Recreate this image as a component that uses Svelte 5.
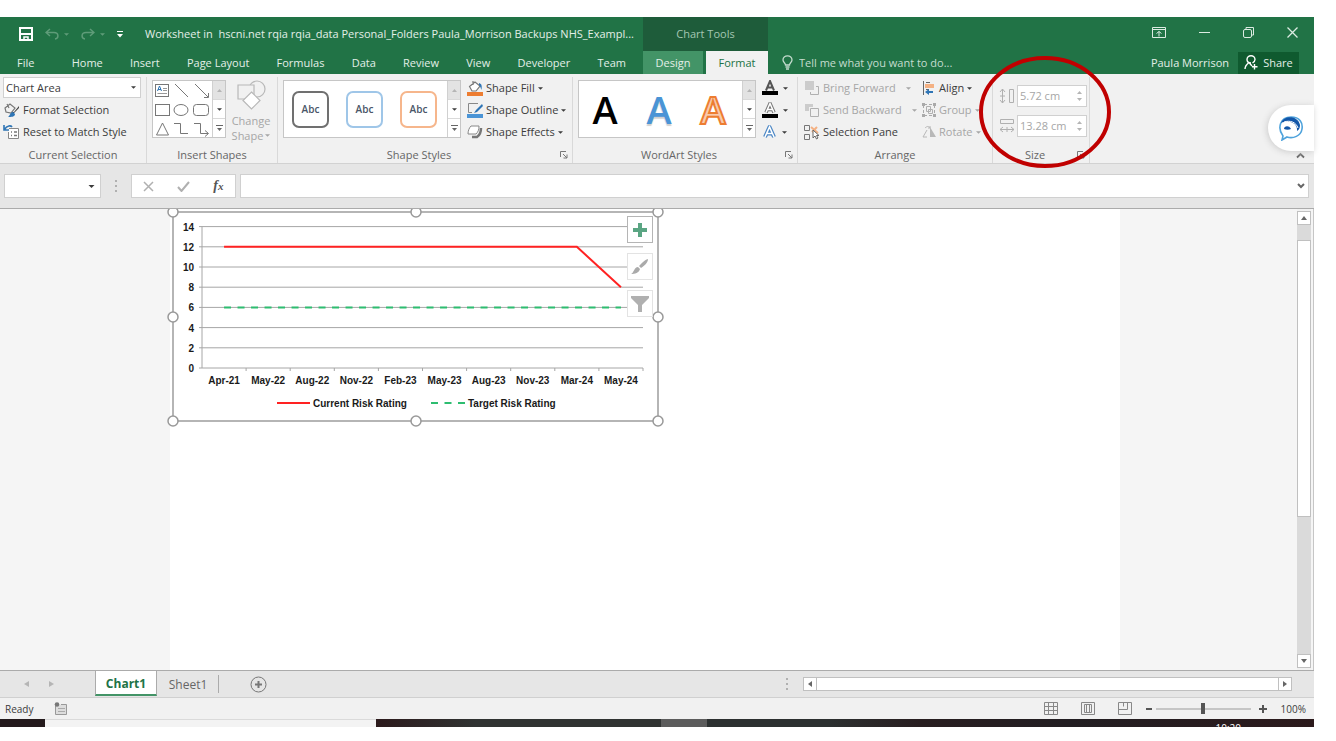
<script>
let area = 'Chart Area'
let nameBox = ''
let formula = ''
let shapeHeight = '5.72 cm'
let shapeWidth = '13.28 cm'
let zoom = 50
let activeTab = 'Format'
let activeSheet = 'Chart1'

const tabs = ['File', 'Home', 'Insert', 'Page Layout', 'Formulas', 'Data', 'Review', 'View', 'Developer', 'Team']
const toolTabs = ['Design', 'Format']
const months = ['Apr-21', 'May-22', 'Aug-22', 'Nov-22', 'Feb-23', 'May-23', 'Aug-23', 'Nov-23', 'Mar-24', 'May-24']
const current = [12, 12, 12, 12, 12, 12, 12, 12, 12, 8]
const target = [6, 6, 6, 6, 6, 6, 6, 6, 6, 6]
const ticks = [0, 2, 4, 6, 8, 10, 12, 14]

const plotLeft = 35
const plotBottom = 163
const step = 44.1

const px = (i) => plotLeft + step * (i + 0.5)
const py = (value) => plotBottom - value * 10.1
const points = (series) => series.map((value, i) => `${px(i)},${py(value)}`).join(' ')

const handles = [[6, 7], [249, 7], [491, 7], [6, 112], [491, 112], [6, 216], [249, 216], [491, 216]]
</script>

<style>
:global(body) {
    margin: 0;
    background: #fff;
}

.page {
    box-sizing: border-box;
    min-height: 100vh;
    padding: 17px 22px 14px 0;
    display: flex;
    flex-direction: column;
    font-family: "Open Sans", "Noto Sans", sans-serif;
    font-size: 11px;
    line-height: 16px;
    color: #3c3c3c;
}

button, input, select {
    font: inherit;
    color: inherit;
    background: none;
    border: none;
    border-radius: 0;
    margin: 0;
    padding: 0;
    box-sizing: border-box;
    min-width: 0;
}

svg {
    display: block;
    flex: none;
    fill: none;
}

/* header */

.header {
    display: flex;
    background: #217346;
    color: #e3efe8;
}

.header-left {
    width: 643px;
}

.title-row {
    height: 34px;
    display: flex;
    align-items: center;
    white-space: pre;
}

.quick {
    width: 145px;
    display: flex;
    align-items: center;
    gap: 12px;
    box-sizing: border-box;
    padding-left: 19px;
}

.quick button {
    display: flex;
    align-items: center;
    gap: 5px;
}

.quick .off {
    color: #5f9c79;
}

.tab-row {
    height: 23px;
    display: flex;
    align-items: center;
}

.tab {
    height: 23px;
    white-space: nowrap;
}

.main-tabs {
    justify-content: space-between;
    padding: 0 17px 0 17px;
}

.main-tabs .tab:first-child {
    padding-right: 10px;
}

.tools {
    width: 125px;
    background: #1e5c3a;
}

.tools p {
    margin: 0;
    height: 34px;
    line-height: 34px;
    text-align: center;
    color: #a5c7b3;
}

.tools .tab-row {
    background: #217346;
    justify-content: space-between;
}

.tools .tab {
    width: 60px;
    background: #439467;
}

.tools .tab.active {
    width: 62px;
    background: #f1f1f1;
    color: #217346;
}

.header-right {
    flex: 1;
}

.window-buttons {
    box-sizing: border-box;
    justify-content: flex-end;
    gap: 33px;
    padding: 0 16px 4px 0;
}

.tell {
    flex: 1;
    display: flex;
    align-items: center;
    gap: 6px;
    padding-left: 14px;
    color: #c5dccf;
}

.tell input {
    width: 240px;
}

.tell input::placeholder {
    color: #c5dccf;
    opacity: 1;
}

.share {
    display: flex;
    align-items: center;
    justify-content: center;
    gap: 5px;
    width: 61px;
    height: 22px;
    margin: 0 15px 0 9px;
    background: #0f5a2f;
}

/* ribbon */

.ribbon {
    position: relative;
    display: flex;
    height: 90px;
    box-sizing: border-box;
    padding-top: 3px;
    background: #f1f1f1;
    border-bottom: 1px solid #d2d2d2;
}

.group {
    box-sizing: border-box;
    height: 86px;
    border-right: 1px solid #d9d9d9;
    display: flex;
    flex-direction: column;
    justify-content: space-between;
}

.group-body {
    display: flex;
    align-items: flex-start;
}

.group-name {
    display: flex;
    align-items: center;
    color: #666;
}

.group-name span {
    flex: 1;
    text-align: center;
}

.group-name button {
    margin-right: 4px;
}

.selection {
    width: 147px;
}

.shapes {
    width: 131px;
}

.styles {
    width: 295px;
}

.wordart {
    width: 225px;
}

.arrange {
    width: 195px;
}

.size {
    width: 97px;
}

.stack {
    display: flex;
    flex-direction: column;
}

.stack button {
    height: 22px;
    display: flex;
    align-items: center;
    gap: 3px;
    white-space: nowrap;
}

.selection .stack {
    padding-left: 3px;
}

.drop {
    position: relative;
    width: 138px;
    height: 21px;
    background: #fff;
    border: 1px solid #d0d0d0;
    box-sizing: border-box;
    display: flex;
    align-items: center;
    margin-bottom: 1px;
}

.drop select {
    appearance: none;
    width: 100%;
    height: 19px;
    padding-left: 2px;
}

.drop svg {
    position: absolute;
    right: 4px;
    pointer-events: none;
}

.off {
    color: #a6a6a6;
}

.gallery {
    display: flex;
    background: #fff;
    border: 1px solid #c6c6c6;
    box-sizing: border-box;
    height: 58px;
    margin-top: 3px;
}

.gallery .items {
    flex: 1;
    display: flex;
    align-items: center;
}

.scroller {
    width: 13px;
    display: flex;
    flex-direction: column;
    border-left: 1px solid #d0d0d0;
    box-sizing: border-box;
}

.scroller button {
    flex: 1;
    display: flex;
    align-items: center;
    justify-content: center;
}

.scroller button + button {
    border-top: 1px solid #d9d9d9;
}

.scroller button:first-child {
    background: #e3e3e3;
    color: #b5b5b5;
}

.shapes .gallery {
    width: 74px;
    margin-left: 5px;
}

.shapes .items {
    display: block;
}

.change {
    display: flex;
    flex-direction: column;
    align-items: center;
    width: 50px;
    padding-top: 3px;
    line-height: 15px;
}

.change svg {
    margin-bottom: 3px;
}

.change span {
    display: flex;
    align-items: center;
    gap: 2px;
}

.change span svg {
    margin: 0;
}

.wide {
    width: 178px;
    margin-left: 5px;
}

.wide .items {
    gap: 17px;
    padding-left: 8px;
}

.preset {
    width: 37px;
    height: 37px;
    border: 2px solid #707070;
    border-radius: 7px;
    font-size: 10px;
    font-weight: 600;
    color: #4a5668;
}

.preset.blue {
    border-color: #9fc6e8;
}

.preset.orange {
    border-color: #f6b68c;
}

.wide .letters {
    gap: 14px;
    padding-left: 6px;
}

.letter {
    width: 40px;
    height: 56px;
    font-size: 38px;
    line-height: 56px;
    font-weight: 600;
    color: #000;
}

.letter.blue {
    color: #4a94d6;
    text-shadow: 0 2px 1px #d0d0d0;
}

.letter.orange {
    color: #f8cbad;
    -webkit-text-stroke: 2px #ed7d31;
}

.styles .stack, .wordart .stack {
    padding-left: 6px;
}

.wordart .stack button {
    gap: 5px;
}

.arrange .stack {
    padding-left: 6px;
    width: 112px;
}

.arrange .stack button svg + svg {
    margin-left: 7px;
}

.arrange .stack + .stack {
    width: 60px;
}

.arrange .stack + .stack button svg + svg {
    margin-left: 0;
}

.size .group-body {
    flex-direction: column;
    gap: 8px;
    padding: 8px 0 0 6px;
}

.spin {
    display: flex;
    align-items: center;
    gap: 2px;
}

.spin-box {
    display: flex;
    width: 70px;
    height: 22px;
    box-sizing: border-box;
    background: #fff;
    border: 1px solid #d0d0d0;
    color: #a6a6a6;
}

.spin-box input {
    flex: 1;
    padding-left: 2px;
}

.spin-box div {
    width: 14px;
    display: flex;
    flex-direction: column;
    align-items: center;
    justify-content: space-evenly;
}

.ring {
    position: absolute;
    left: 978px;
    top: -19px;
    z-index: 2;
    pointer-events: none;
}

.chat {
    position: absolute;
    right: 0;
    top: 31px;
    width: 46px;
    height: 46px;
    padding-left: 10px;
    background: #fff;
    border-radius: 23px 0 0 23px;
    box-shadow: -1px 1px 6px #ccc;
}

.collapse {
    margin: auto 9px 4px auto;
}

/* formula bar */

.formula {
    display: flex;
    align-items: center;
    height: 45px;
    box-sizing: border-box;
    padding: 0 5px 0 4px;
    background: #e6e6e6;
    border-bottom: 1px solid #ababab;
}

.field {
    display: flex;
    align-items: center;
    height: 24px;
    box-sizing: border-box;
    background: #fff;
    border: 1px solid #d0d0d0;
}

.field input {
    flex: 1;
    padding-left: 4px;
}

.name-box {
    width: 97px;
    padding-right: 5px;
}

.formula .dots {
    margin: 0 14px;
}

.checks {
    width: 105px;
    justify-content: space-around;
    color: #b0b0b0;
    margin-right: 4px;
}

.fx {
    font-family: "Liberation Serif", serif;
    font-style: italic;
    font-weight: 700;
    font-size: 14px;
    color: #555;
}

.fx small {
    font-size: 11px;
}

.entry {
    flex: 1;
    padding-right: 3px;
}

/* sheet */

.sheet {
    flex: 1;
    display: flex;
    background: #f5f5f5;
    border-right: 1px solid #c6c6c6;
}

.canvas {
    flex: 1;
    padding: 0 177px 0 170px;
}

.paper {
    position: relative;
    height: 100%;
    min-height: 240px;
    background: #fff;
}

.chart {
    position: absolute;
    left: -3px;
    top: -4px;
    clip-path: inset(4px 0 0 0);
}

.chart text {
    font-family: "Liberation Sans", Arial, sans-serif;
    font-size: 10px;
    font-weight: 700;
    fill: #1a1a1a;
}

.chart-buttons {
    position: absolute;
    left: 457px;
    top: 7px;
    display: flex;
    flex-direction: column;
    gap: 10px;
}

.chart-buttons button {
    width: 26px;
    height: 27px;
    display: flex;
    align-items: center;
    justify-content: center;
    background: #fff;
    border: 1px solid #e3e3e3;
}

.chart-buttons button:first-child {
    border-color: #b5b5b5;
}

.vscroll {
    width: 14px;
    margin-right: 2px;
    padding: 2px 0;
    display: flex;
    flex-direction: column;
    background: #f1f1f1;
}

.vscroll button, .hscroll button {
    width: 14px;
    height: 14px;
    box-sizing: border-box;
    display: flex;
    align-items: center;
    justify-content: center;
    background: #fff;
    border: 1px solid #c0c0c0;
    color: #666;
}

.track {
    flex: 1;
    padding-top: 15px;
    background: #dadada;
}

.thumb {
    height: 67%;
    box-sizing: border-box;
    background: #fff;
    border: 1px solid #c0c0c0;
}

.sheet-bar {
    display: flex;
    align-items: center;
    height: 28px;
    box-sizing: border-box;
    background: #e6e6e6;
    border-top: 1px solid #ababab;
    border-bottom: 1px solid #d0d0d0;
    font-size: 12px;
}

.arrows {
    width: 95px;
    box-sizing: border-box;
    padding-left: 24px;
    display: flex;
    gap: 20px;
    color: #b5b5b5;
}

.sheet-tab {
    height: 25px;
    width: 62px;
    padding-top: 2px;
    align-self: flex-start;
    color: #666;
}

.sheet-tab.active {
    background: #fff;
    color: #217346;
    font-weight: 700;
    border: solid #ababab;
    border-width: 0 1px;
    border-bottom: 2px solid #439467;
}

.divider {
    width: 1px;
    height: 18px;
    background: #ababab;
    margin: 0 31px 0 -1px;
}

.sheet-bar .dots {
    margin-left: auto;
}

.hscroll {
    display: flex;
    width: 489px;
    margin: 0 22px 0 15px;
}

.hscroll div {
    flex: 1;
    background: #fff;
    border: solid #c0c0c0;
    border-width: 1px 0;
}

.status {
    display: flex;
    align-items: center;
    height: 21px;
    box-sizing: border-box;
    padding: 0 8px 0 5px;
    background: #f1f1f1;
    font-size: 10px;
}

.status .record {
    margin-left: 21px;
}

.views {
    display: flex;
    gap: 23px;
    margin: 0 14px 0 auto;
}

.zoom {
    display: flex;
    align-items: center;
    gap: 3px;
}

.zoom input {
    appearance: none;
    width: 95px;
    height: 12px;
    background: linear-gradient(#c6c6c6, #c6c6c6) center / 100% 2px no-repeat;
    margin: 0 5px 0 1px;
}

.zoom input::-webkit-slider-thumb {
    appearance: none;
    width: 4px;
    height: 11px;
    background: #555;
}

.percent {
    margin-left: 14px;
}

/* sliver of the desktop task bar */

.taskbar {
    display: flex;
    height: 8px;
    overflow: hidden;
    background: #241a1c;
    color: #fff;
}

.taskbar .start {
    width: 45px;
}

.taskbar .search {
    width: 331px;
    background: #f3f3f3;
    border-top: 1px solid #dadada;
    box-sizing: border-box;
}

.taskbar .apps {
    width: 285px;
    background: linear-gradient(90deg, #2c1a1c, #303332 35%);
}

.taskbar .open {
    width: 46px;
    background: #5c5c5c;
}

.taskbar .tray {
    flex: 1;
    background: linear-gradient(90deg, #2c3030, #2c3030 20%, #281e20 35%, #221e22 60%, #2c1a1c);
    text-align: right;
    padding-right: 73px;
    font-size: 10px;
    line-height: 14px;
}

.taskbar time {
    display: block;
    padding-top: 2px;
}
</style>

{#snippet caret(w = 5)}
    <svg width={w} height="3" viewBox="0 0 6 3"><path d="M0 0h6L3 3z" fill="currentColor" /></svg>
{/snippet}

{#snippet launcher(name)}
    <button aria-label={name}>
        <svg width="8" height="8" stroke="#777"><path d="M.5 6V.5H6M3 3l4 4M7 3.500V7H3.500" /></svg>
    </button>
{/snippet}

{#snippet scroller(name)}
    <div class="scroller">
        <button aria-label="{name} row up"><svg width="5" height="3"><path d="M0 3h5L2.500 0z" fill="currentColor" /></svg></button>
        <button aria-label="{name} row down">{@render caret()}</button>
        <button aria-label="More {name}"><svg width="7" height="7"><path d="M0 .5h7" stroke="#666" /><path d="M1 3h5L3.500 6z" fill="#666" /></svg></button>
    </div>
{/snippet}

{#snippet dots()}
    <svg class="dots" width="2" height="12"><path d="M0 0h2v2H0zM0 5h2v2H0zM0 10h2v2H0z" fill="#b0b0b0" /></svg>
{/snippet}

{#snippet spinArrows(name)}
    <div>
        <button aria-label="Increase {name}"><svg width="5" height="3"><path d="M0 3h5L2.500 0z" fill="#b5b5b5" /></svg></button>
        <button aria-label="Decrease {name}"><svg width="5" height="3"><path d="M0 0h5L2.500 3z" fill="#b5b5b5" /></svg></button>
    </div>
{/snippet}

<div class="page">
    <header class="header">
        <div class="header-left">
            <div class="title-row">
                <div class="quick">
                    <button aria-label="Save">
                        <svg width="14" height="14" stroke="#fff" stroke-width="2"><path d="M1 1h12v12H1zM1 7h12" /><path d="M5 13v-3h4v3" stroke-width="1.500" /></svg>
                    </button>
                    <button class="off" aria-label="Undo">
                        <svg width="14" height="12" stroke="currentColor" stroke-width="1.500"><path d="M5 1L1 4.500 5 8M1 4.500h8c5 0 5 6 1 6.500" /></svg>
                        {@render caret()}
                    </button>
                    <button class="off" aria-label="Redo">
                        <svg width="14" height="12" stroke="currentColor" stroke-width="1.500"><path d="M9 1l4 3.500L9 8M13 4.500H5C0 4.500 0 10.500 4 11" /></svg>
                        {@render caret()}
                    </button>
                    <button aria-label="Customize Quick Access Toolbar">
                        <svg width="6" height="7"><path d="M0 .5h6" stroke="#fff" /><path d="M0 3h6L3 6.500z" fill="#fff" /></svg>
                    </button>
                </div>
                <span>Worksheet in  hscni.net rqia rqia_data Personal_Folders Paula_Morrison Backups NHS_Exampl...</span>
            </div>
            <nav class="tab-row main-tabs">
                {#each tabs as tab}
                    <button class="tab" on:click={() => activeTab = tab}>{tab}</button>
                {/each}
            </nav>
        </div>
        <div class="tools">
            <p>Chart Tools</p>
            <nav class="tab-row">
                {#each toolTabs as tab}
                    <button class="tab" class:active={activeTab === tab} on:click={() => activeTab = tab}>{tab}</button>
                {/each}
            </nav>
        </div>
        <div class="header-right">
            <div class="title-row window-buttons">
                <button aria-label="Ribbon Display Options">
                    <svg width="14" height="11" stroke="#dcebe2"><path d="M.5 .5h13v10H.5zM.5 2.500h13M7 9.500V4.500M4.500 6.500L7 4.500l2.500 2" /></svg>
                </button>
                <button aria-label="Minimize"><svg width="11" height="11" stroke="#dcebe2"><path d="M0 5.500h11" /></svg></button>
                <button aria-label="Restore">
                    <svg width="11" height="11" stroke="#dcebe2"><rect x=".5" y="2.500" width="8" height="8" rx="1.500" /><path d="M3 2.500V.5h7.500V8H8.500" /></svg>
                </button>
                <button aria-label="Close"><svg width="11" height="11" stroke="#dcebe2" stroke-width="1.300"><path d="M.5 .5l10 10M10.500 .5l-10 10" /></svg></button>
            </div>
            <div class="tab-row">
                <label class="tell">
                    <svg width="11" height="15" stroke="#c5dccf" stroke-width="1.300"><path d="M3.500 10C3.500 8 1 7.500 1 5a4.500 4.200 0 0 1 9 0c0 2.500-2.500 3-2.500 5zM3.500 12h4M4 14h3" /></svg>
                    <input type="text" aria-label="Tell me" placeholder="Tell me what you want to do..." />
                </label>
                <span>Paula Morrison</span>
                <button class="share">
                    <svg width="14" height="15" stroke="#fff" stroke-width="1.400"><path d="M7 8C4 8 3 6 3 4.500a4 3.800 0 0 1 8 0C11 6 10 7 8.500 8M5 7.500C3 9 1 11 1 14M5 7.500l3 3.500M10.500 9v5.500M8 11.700h5.500" /></svg>
                    Share
                </button>
            </div>
        </div>
    </header>

    <section class="ribbon">
        <div class="group selection">
            <div class="stack">
                <div class="drop">
                    <select aria-label="Chart Elements" bind:value={area}>
                        <option>Chart Area</option>
                    </select>
                    {@render caret()}
                </div>
                <button>
                    <svg width="17" height="16"><path d="M2 6l5-4 5 4-4 5-5-1zM4 2l2 4" stroke="#777" stroke-width="1.200" /><path d="M16 4l-5 6-2 0 1 2 6-6z" fill="#444" /><path d="M5 15c2-1 2-5 5-5l2 2c0 3-4 3-7 3z" fill="#2f75b5" /></svg>
                    Format Selection
                </button>
                <button>
                    <svg width="17" height="16"><path d="M6 4.500h9.500v10h-10V8" stroke="#888" fill="#fff" /><path d="M8 8h1M11 8h3M8 11.500h1M11 11.500h3" stroke="#777" stroke-width="1.500" /><path d="M1 1v5h5M1.500 5.500C4 1 8 1.500 9 3" stroke="#2f75b5" stroke-width="1.600" /></svg>
                    Reset to Match Style
                </button>
            </div>
            <div class="group-name"><span>Current Selection</span></div>
        </div>

        <div class="group shapes">
            <div class="group-body">
                <div class="gallery">
                    <div class="items">
                        <svg width="59" height="56" stroke="#777">
                            <rect x="2.500" y="3.500" width="13" height="12" /><path d="M4.500 10l2-5 2 5M5 8.500h3" stroke="#2f75b5" /><path d="M10 7.500h4M10 9.500h4M4.500 12.500h9.500" stroke="#999" />
                            <path d="M22 3l13 13M42 3l13 13M55.500 12v4.500H51" />
                            <rect x="2.500" y="23.500" width="14" height="11" /><ellipse cx="28" cy="29" rx="7" ry="5.500" /><rect x="40.500" y="23.500" width="15" height="11" rx="3" />
                            <path d="M9.500 42l6 12h-12zM21 42.500h6.500v10H35M41 42.500h6.500v10H55M52 49.500l3.500 3-3.500 3" />
                        </svg>
                    </div>
                    {@render scroller('shapes')}
                </div>
                <button class="change off">
                    <svg width="29" height="30" stroke="#b8b8b8" stroke-width="1.200"><circle cx="20" cy="9" r="8" /><path d="M1 5h16v14H1z" fill="#f1f1f1" /><path d="M14.500 12l8.500 8.500-8.500 8.500L6 20.500z" fill="#fff" /></svg>
                    Change
                    <span>Shape {@render caret()}</span>
                </button>
            </div>
            <div class="group-name"><span>Insert Shapes</span></div>
        </div>

        <div class="group styles">
            <div class="group-body">
                <div class="gallery wide">
                    <div class="items">
                        <button class="preset">Abc</button>
                        <button class="preset blue">Abc</button>
                        <button class="preset orange">Abc</button>
                    </div>
                    {@render scroller('shape styles')}
                </div>
                <div class="stack">
                    <button>
                        <svg width="16" height="16"><path d="M2.500 6.500L8 2l5 4-4 5H5zM6 1v4" stroke="#777" stroke-width="1.200" fill="#fff" /><path d="M12 3c3 1 3 3 2.500 7-1-2-1-4-2.500-5z" fill="#2f75b5" /><path d="M0 12h16v4H0z" fill="#ed7d31" /></svg>
                        Shape Fill {@render caret()}
                    </button>
                    <button>
                        <svg width="16" height="16"><path d="M11 1.500H1.500v9H5" stroke="#888" /><path d="M15 2l-6 6-2 3 3-1 6-6z" fill="#2f75b5" /><path d="M0 12h16v4H0z" fill="#4a94d6" /></svg>
                        Shape Outline {@render caret()}
                    </button>
                    <button>
                        <svg width="16" height="16"><path d="M5 13h5c3-2 4-5 4-9" stroke="#777" stroke-width="2.500" /><path d="M4 2h8c0 4-1 6-3 8H1c0-3 1-6 3-8z" fill="#fff" stroke="#888" stroke-linejoin="round" /></svg>
                        Shape Effects {@render caret()}
                    </button>
                </div>
            </div>
            <div class="group-name"><span>Shape Styles</span>{@render launcher('Format Shape')}</div>
        </div>

        <div class="group wordart">
            <div class="group-body">
                <div class="gallery wide">
                    <div class="items letters">
                        <button class="letter">A</button>
                        <button class="letter blue">A</button>
                        <button class="letter orange">A</button>
                    </div>
                    {@render scroller('WordArt styles')}
                </div>
                <div class="stack">
                    <button aria-label="Text Fill">
                        <svg width="16" height="16"><path d="M4 10.500L8 1l4 9.500M5.500 7.500h5" stroke="#555" stroke-width="2" /><path d="M0 11h16v4H0z" fill="#000" /></svg>
                        {@render caret()}
                    </button>
                    <button aria-label="Text Outline">
                        <svg width="16" height="16"><path d="M4 10.500L8 1.500l4 9M5.500 7.500h5" stroke="#777" stroke-width="3.500" /><path d="M4 10.500L8 1.500l4 9M5.500 7.500h5" stroke="#fff" stroke-width="1.500" /><path d="M0 12h16v4H0z" fill="#000" /></svg>
                        {@render caret()}
                    </button>
                    <button aria-label="Text Effects">
                        <svg width="15" height="16"><path d="M3 13L7.500 3 12 13M4.500 9.500h6" stroke="#4a86c5" stroke-width="4" stroke-linejoin="round" /><path d="M3 13L7.500 3 12 13M4.500 9.500h6" stroke="#fff" stroke-width="1.600" /></svg>
                        {@render caret()}
                    </button>
                </div>
            </div>
            <div class="group-name"><span>WordArt Styles</span>{@render launcher('Format Text Effects')}</div>
        </div>

        <div class="group arrange">
            <div class="group-body">
                <div class="stack">
                    <button class="off">
                        <svg width="16" height="16"><path d="M1 1h9v9H1z" fill="#ccc" /><path d="M12 6.500h2.500v8h-8V12" stroke="#b0b0b0" /></svg>
                        Bring Forward {@render caret()}
                    </button>
                    <button class="off">
                        <svg width="16" height="16"><path d="M1 2h8v3H5v4H1z" fill="#ccc" /><path d="M6.500 6.500h8v8h-8z" stroke="#b0b0b0" /></svg>
                        Send Backward {@render caret()}
                    </button>
                    <button>
                        <svg width="16" height="16"><path d="M.5 1.500h5v5h-5zM.5 10.500h5v5h-5z" stroke="#777" /><path d="M7 3l7 6M13 3L8 8" stroke="#f4b183" stroke-width="2" /><path d="M9 6v8l2-2 1.500 3 1.500-1-1.500-2.500H15z" fill="#fff" stroke="#666" /></svg>
                        Selection Pane
                    </button>
                </div>
                <div class="stack">
                    <button>
                        <svg width="14" height="16"><path d="M1.500 1v14M4 2.500h4M4 9.500h3" stroke="#666" /><path d="M3 4h9v4H3z" fill="#f4b183" /><path d="M3 12l4-3v2h4v2H7v2z" fill="#2f75b5" /></svg>
                        Align {@render caret()}
                    </button>
                    <button class="off">
                        <svg width="14" height="16"><path d="M1.500 3v10M12.500 3v10M2 2.500h10M2 13.500h10" stroke="#aaa" stroke-dasharray="3 2" /><path d="M0 1h3v3H0zM11 1h3v3h-3zM0 12h3v3H0zM11 12h3v3h-3z" fill="#aaa" /><path d="M4.500 4.500h4v5h-4zM6.500 7.500h4v4h-4z" stroke="#b0b0b0" /></svg>
                        Group {@render caret()}
                    </button>
                    <button class="off">
                        <svg width="14" height="16"><path d="M5 13H1l4-7M3 4c2-2 4-2 5 0M6 4h2V2" stroke="#b8b8b8" /><path d="M8 3l6 10H8z" fill="#b8b8b8" /></svg>
                        Rotate {@render caret()}
                    </button>
                </div>
            </div>
            <div class="group-name"><span>Arrange</span></div>
        </div>

        <div class="group size">
            <div class="group-body">
                <div class="spin">
                    <svg width="16" height="16" stroke="#b0b0b0"><path d="M10.500 1.500h4v13h-4zM3.500 1v14M1 4l2.500-3L6 4M1 12l2.500 3L6 12M1 8h5" /></svg>
                    <div class="spin-box">
                        <input type="text" aria-label="Shape Height" bind:value={shapeHeight} />
                        {@render spinArrows('height')}
                    </div>
                </div>
                <div class="spin">
                    <svg width="16" height="16" stroke="#b0b0b0"><path d="M1.500 1.500h13v4h-13zM1 11.500h14M4 9l-3 2.500L4 14M12 9l3 2.500-3 2.500M8 9v5" /></svg>
                    <div class="spin-box">
                        <input type="text" aria-label="Shape Width" bind:value={shapeWidth} />
                        {@render spinArrows('width')}
                    </div>
                </div>
            </div>
            <div class="group-name"><span>Size</span>{@render launcher('Size and Properties')}</div>
        </div>

        <button class="collapse" aria-label="Collapse the Ribbon"><svg width="9" height="7" stroke="#666" stroke-width="1.800"><path d="M1 5.500l3.500-3.500L8 5.500" /></svg></button>
        <svg class="ring" width="134" height="114"><ellipse cx="67" cy="57" rx="64" ry="54" stroke="#c00000" stroke-width="4" /></svg>
        <button class="chat" aria-label="Assistant">
            <svg width="26" height="26">
                <path d="M5 21C-1 13 2 2 13 2c9 0 12 6 11 12-1 7-9 10-15 8l-5 3z" stroke="#4fa3dc" stroke-width="1.600" fill="#fff" />
                <path d="M3 8C6 0 20 0 22 10c0 3-1 5-3 6 1-8-8-12-16-8z" fill="#1256a8" />
                <path d="M6 7c6-2 12 0 14 6" stroke="#fff" />
                <path d="M6 14c0-3 5-4 7 0-2 1-5 1-7 0z" fill="#1256a8" />
            </svg>
        </button>
    </section>

    <div class="formula">
        <div class="field name-box">
            <input type="text" aria-label="Name Box" bind:value={nameBox} />
            <button aria-label="Names">{@render caret(7)}</button>
        </div>
        {@render dots()}
        <div class="field checks">
            <button aria-label="Cancel"><svg width="11" height="11" stroke="currentColor" stroke-width="1.500"><path d="M1 1l9 9M10 1l-9 9" /></svg></button>
            <button aria-label="Enter"><svg width="13" height="11" stroke="currentColor" stroke-width="2"><path d="M1 6l3.500 4L12 1" /></svg></button>
            <button class="fx" aria-label="Insert Function">f<small>x</small></button>
        </div>
        <div class="field entry">
            <input type="text" aria-label="Formula" bind:value={formula} />
            <button aria-label="Expand Formula Bar"><svg width="8" height="6" stroke="#666" stroke-width="2"><path d="M1 1l3 3 3-3" /></svg></button>
        </div>
    </div>

    <main class="sheet">
        <div class="canvas">
            <div class="paper">
                <svg class="chart" width="500" height="224">
                    <rect x="6" y="7" width="485" height="209" stroke="#b5b5b5" stroke-width="2" />
                    {#each ticks as tick}
                        <path d="M{plotLeft - 3} {py(tick)}H{plotLeft + step * 10}" stroke="#a6a6a6" />
                        <text x="27" y={py(tick) + 4} text-anchor="end">{tick}</text>
                    {/each}
                    <path d="M{plotLeft} {py(14)}V{plotBottom}" stroke="#a6a6a6" />
                    {#each months as month, i}
                        <path d="M{plotLeft + step * (i + 1)} {plotBottom}v3" stroke="#a6a6a6" />
                        <text x={px(i)} y="179" text-anchor="middle">{month}</text>
                    {/each}
                    <polyline points={points(current)} stroke="#f22" stroke-width="2" />
                    <polyline points={points(target)} stroke="#2dbd70" stroke-width="2" stroke-dasharray="7 6.500" />
                    <path d="M110 198h33" stroke="#f22" stroke-width="2" />
                    <text x="146" y="202">Current Risk Rating</text>
                    <path d="M264 198h35" stroke="#2dbd70" stroke-width="2" stroke-dasharray="7 6.500" />
                    <text x="301" y="202">Target Risk Rating</text>
                    {#each handles as [x, y]}
                        <circle cx={x} cy={y} r="5" fill="#fff" stroke="#999" stroke-width="1.500" />
                    {/each}
                </svg>
                <div class="chart-buttons">
                    <button aria-label="Chart Elements"><svg width="14" height="14"><path d="M7 0v14M0 7h14" stroke="#5aa583" stroke-width="4" /></svg></button>
                    <button aria-label="Chart Styles"><svg width="18" height="16"><path d="M17 0c0 4-4 7-7 9L8 7c2-2 5-6 9-7z" fill="#aaa" /><path d="M7 8l2 2c-1 4-5 5-9 5 3-1 3-7 7-7z" fill="#aaa" /></svg></button>
                    <button aria-label="Chart Filters"><svg width="18" height="16"><path d="M0 0h18v2l-7 7v7H7V9L0 2z" fill="#b0b0b0" /></svg></button>
                </div>
            </div>
        </div>
        <div class="vscroll">
            <button aria-label="Scroll up"><svg width="6" height="4"><path d="M0 4h6L3 0z" fill="currentColor" /></svg></button>
            <div class="track"><div class="thumb"></div></div>
            <button aria-label="Scroll down"><svg width="6" height="4"><path d="M0 0h6L3 4z" fill="currentColor" /></svg></button>
        </div>
    </main>

    <div class="sheet-bar">
        <div class="arrows">
            <button aria-label="Previous sheet"><svg width="5" height="6"><path d="M5 0v6L0 3z" fill="currentColor" /></svg></button>
            <button aria-label="Next sheet"><svg width="5" height="6"><path d="M0 0v6l5-3z" fill="currentColor" /></svg></button>
        </div>
        {#each ['Chart1', 'Sheet1'] as name}
            <button class="sheet-tab" class:active={activeSheet === name} on:click={() => activeSheet = name}>{name}</button>
        {/each}
        <span class="divider"></span>
        <button aria-label="New sheet"><svg width="17" height="17" stroke="#777"><circle cx="8.500" cy="8.500" r="7.500" /><path d="M8.500 5v7M5 8.500h7" stroke-width="2" /></svg></button>
        {@render dots()}
        <div class="hscroll">
            <button aria-label="Scroll left"><svg width="4" height="6"><path d="M4 0v6L0 3z" fill="currentColor" /></svg></button>
            <div></div>
            <button aria-label="Scroll right"><svg width="4" height="6"><path d="M0 0v6l4-3z" fill="currentColor" /></svg></button>
        </div>
    </div>

    <footer class="status">
        <span>Ready</span>
        <button class="record" aria-label="Record Macro"><svg width="13" height="13"><path d="M1.500 4v8.500h11v-10H7" fill="#ddd" stroke="#999" /><path d="M4 6.500h7M4 9.500h7" stroke="#aaa" /><circle cx="3" cy="2.500" r="2.300" fill="#777" /></svg></button>
        <div class="views">
            <button aria-label="Normal"><svg width="14" height="13" stroke="#888"><path d="M.5 .5h13v12H.5zM.5 4.500h13M.5 8.500h13M4.500 .5v12M9.500 .5v12" /></svg></button>
            <button aria-label="Page Layout view"><svg width="14" height="13" stroke="#888"><path d="M.5 .5h13v12H.5zM3.500 2.500h7v8h-7zM5.500 3v7M8.500 3v7" /></svg></button>
            <button aria-label="Page Break Preview"><svg width="14" height="13" stroke="#888"><path d="M.5 .5h13v12H.5zM.5 7.500h9V.5M5.500 .5v4" /></svg></button>
        </div>
        <div class="zoom">
            <button aria-label="Zoom Out"><svg width="6" height="2"><path d="M0 0h6v2H0z" fill="#555" /></svg></button>
            <input type="range" aria-label="Zoom" min="0" max="100" bind:value={zoom} />
            <button aria-label="Zoom In"><svg width="8" height="8"><path d="M4 0v8M0 4h8" stroke="#555" stroke-width="2" /></svg></button>
        </div>
        <span class="percent">100%</span>
    </footer>

    <div class="taskbar">
        <div class="start"></div>
        <div class="search"></div>
        <div class="apps"></div>
        <div class="open"></div>
        <div class="tray"><time>10:20</time></div>
    </div>
</div>
